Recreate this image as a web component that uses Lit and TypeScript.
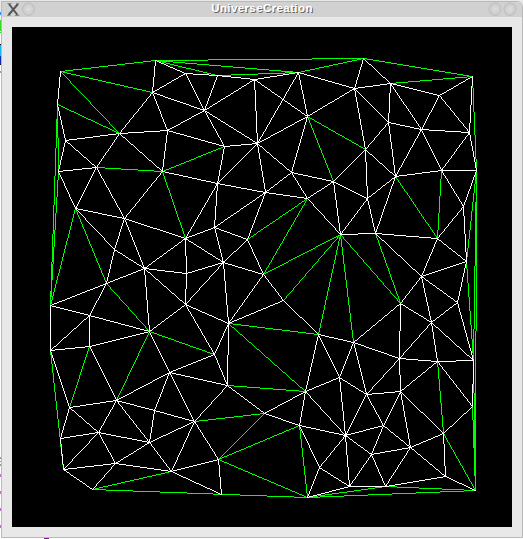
import { LitElement, html, css, svg } from "lit";
import { customElement } from "lit/decorators.js";

// Mesh vertices: name -> [x, y] in window coordinates.
const V: Record<string, [number, number]> = {
  A: [60, 71], B: [155, 60], C: [152, 92], D: [185, 73], E: [119, 133], F: [57, 104],
  G: [65, 140], H: [58, 171], I: [96, 167], J: [167, 130], K: [162, 171], L: [217, 75],
  M: [254, 79], N: [204, 110], O: [298, 72], P: [307, 116], Q: [257, 143], R: [224, 146],
  S: [217, 183], T: [291, 172], U: [265, 192], V: [307, 198], W: [363, 58], X: [354, 88],
  Y: [390, 83], Z: [472, 76], a: [439, 95], b: [388, 122], c: [421, 129], d: [469, 132],
  e: [365, 149], f: [333, 181], g: [395, 176], h: [441, 170], i: [476, 170], j: [367, 198],
  k: [75, 208], l: [124, 218], m: [185, 238], n: [114, 249], o: [144, 268], p: [106, 283],
  q: [50, 305], r: [89, 315], s: [149, 331], t: [50, 350], u: [214, 227], v: [247, 239],
  w: [223, 262], x: [186, 273], y: [185, 304], z: [263, 274], aa: [283, 300], bb: [228, 323],
  cc: [318, 334], dd: [340, 234], ee: [375, 233], ff: [437, 238], gg: [463, 206],
  hh: [466, 261], ii: [421, 276], jj: [457, 302], kk: [400, 303], ll: [431, 322],
  mm: [353, 342], nn: [89, 346], oo: [69, 407], pp: [116, 400], qq: [169, 372],
  rr: [154, 410], uu: [98, 432], vv: [60, 438], ss: [149, 442], ww: [63, 469],
  xx: [115, 463], yy: [92, 489], zz: [171, 471], A1: [214, 354], A2: [227, 385],
  A3: [305, 391], A4: [194, 421], A5: [264, 413], A6: [299, 425], A7: [218, 459],
  A8: [221, 494], A9: [307, 497], B1: [319, 467], B2: [339, 377], B3: [399, 358],
  B4: [437, 361], B5: [473, 360], B6: [366, 394], B7: [400, 391], B8: [472, 406],
  B9: [383, 425], C1: [345, 435], C2: [443, 433], C3: [371, 454], C4: [410, 447],
  C5: [349, 486], C6: [385, 486], C7: [445, 476], C8: [475, 490],
};

const WHITE = `
A-F F-G G-H G-E G-I H-I H-k I-k I-l I-E E-C E-J E-K C-B C-D C-J C-N B-D J-K J-N J-R K-l K-S
D-L D-N L-N L-M M-N M-O M-Q M-P O-Q O-P O-X N-Q N-R R-Q R-S P-X P-Q P-T Q-S Q-U Q-T S-U S-m
S-u U-T U-u U-V U-v T-V T-f V-f V-dd W-X W-Y X-Y X-b X-e Y-b Y-c Y-a Z-a Z-d a-c a-d b-c b-e
b-g c-d c-g c-h d-h d-i h-g h-i h-gg i-gg e-f e-g e-j f-j f-dd g-j g-ee j-dd j-ee
k-l k-n n-o l-n n-p l-o l-m o-m o-x o-p o-y o-s p-q p-r q-r q-t r-t r-s r-nn t-nn nn-s s-y
s-qq m-x m-w m-u x-y x-w w-u w-v w-y w-z w-bb u-v v-z z-aa z-bb aa-bb aa-cc y-bb y-A1 bb-A1
bb-A2 cc-mm cc-A3 cc-B2 dd-ee ee-ff ee-ii ff-gg ff-hh ff-ii gg-hh hh-ii hh-jj ii-jj ii-kk
ii-ll jj-ll jj-B5 kk-ll kk-mm kk-B3 ll-B3 ll-B4 ll-B5 mm-B2 mm-B3 mm-B6 B3-B4 B4-B5 B3-B6
B3-B7 B2-B6 B2-A3 B2-C1 B6-B7 B6-B9 B6-C1 B7-B4 B7-B9 B7-C4 B7-C2 B4-B8 B5-B8 B8-C2 B9-C1
B9-C3 B9-C4 C1-C3 C1-C5 C1-A6 C1-A3 C1-B1 C3-C5 C3-C6 C3-C4 C4-C6 C4-C7 C4-C2 C2-C7 C7-C8
C7-C6 C5-C6 C5-A9 C5-B1 t-oo oo-pp oo-uu oo-vv vv-uu vv-ww uu-ww uu-pp uu-ss uu-xx ww-xx
ww-yy xx-yy xx-ss xx-zz ss-pp ss-rr ss-A4 ss-zz pp-rr pp-qq pp-nn rr-qq rr-A4 qq-A1 qq-A2
qq-A4 zz-A4 zz-A7 zz-A8 A7-A8 A7-A4 A4-A2 A1-A2 A2-A5 A5-A3 A5-A6 A3-A6 A6-B1 B1-A9`;

const GREEN = `
A-B A-C A-E F-E F-q F-H H-q K-R K-m I-K B-W B-O B-L L-O O-W W-Z Y-Z P-e P-f g-ff h-ff Z-i
i-hh i-B5 i-C8 hh-B5 B5-C8 B8-C8 k-q k-p p-s s-pp s-A1 V-v V-z z-dd dd-aa dd-cc dd-mm dd-kk
ee-kk bb-cc bb-A3 A2-A3 A4-A5 A5-A7 A6-A7 A6-A9 A7-A9 yy-zz yy-A9 A9-C8 A9-C6 C6-C8 B4-C2
C2-C8 nn-oo t-ww`;

// One-pixel stepped line, emitted as unit squares along the major axis.
function pixelLine([x0, y0]: [number, number], [x1, y1]: [number, number]): string {
  const n = Math.max(Math.abs(x1 - x0), Math.abs(y1 - y0));
  let d = "";
  for (let k = 0; k <= n; k++) {
    const x = Math.round(x0 + ((x1 - x0) * k) / n);
    const y = Math.round(y0 + ((y1 - y0) * k) / n);
    d += `M${x} ${y}h1v1h-1z`;
  }
  return d;
}

const trace = (edges: string) =>
  edges.trim().split(/\s+/).map((edge) => {
    const [from, to] = edge.split("-");
    return pixelLine(V[from], V[to]);
  }).join("");

@customElement("mesh-view")
export class MeshView extends LitElement {
  static styles = css`
    :host { display: block; width: 500px; height: 500px; background: #000; }
    svg { display: block; shape-rendering: crispEdges; }
    .outer { fill: #0f0; }
    .inner { fill: #fff; }
  `;
  render() {
    return html`<svg width="500" height="500" viewBox="12 27 500 500">
      ${svg`<path class="outer" d=${trace(GREEN)}></path><path class="inner" d=${trace(WHITE)}></path>`}
    </svg>`;
  }
}

@customElement("app-root")
export class AppRoot extends LitElement {
  static styles = css`
    :host {
      display: grid;
      grid-template-columns: 1px 522px;
      grid-template-rows: 538px 1px;
      width: 523px;
      height: 539px;
      overflow: hidden;
      background: #e8e8e8;
    }
    .window {
      box-sizing: border-box;
      height: 537px;
      margin-top: 1px;
      border: 1px solid #b8bab8;
      border-radius: 0 6px 0 0;
      background: #e8e8e8;
    }
    .bar {
      display: grid;
      grid-template-columns: 34px 1fr 34px;
      height: 15px;
      background: #d1d1d1;
      border-radius: 0 5px 0 0;
    }
    .buttons { display: block; width: 34px; height: 15px; }
    .title {
      font: bold 11.5px/13px "Liberation Sans", Arial, sans-serif;
      letter-spacing: 0.4px;
      text-align: center;
      color: #fff;
      text-shadow: 1px 1px 0 #666;
    }
    mesh-view { margin: 10px 0 0 10px; }
    .strip { grid-row: 1 / 3; width: 1px; height: 539px; }
    .below { display: block; width: 522px; height: 1px; }
  `;

  private orb(cx: number) {
    return svg`<ellipse cx=${cx} cy="7.2" rx="6" ry="6.3" fill="url(#orb)" stroke="#bfbfbf" stroke-width="1"></ellipse>`;
  }

  private gradient() {
    return svg`<defs><radialGradient id="orb"><stop offset="0" stop-color="#dedede"></stop><stop offset="1" stop-color="#c8c8c8"></stop></radialGradient></defs>`;
  }

  render() {
    return html`
      <svg class="strip" width="1" height="539" viewBox="0 0 1 539" shape-rendering="crispEdges">
        <path fill="#fff" d="M0 16h1v523h-1z"></path>
        <path fill="#3a8cf0" d="M0 12h1v3h-1z"></path>
        <path fill="#38d826" d="M0 20h1v11h-1zM0 32h1v1h-1z"></path>
        <path fill="#111" d="M0 44h1v1h-1zM0 64h1v1h-1z"></path>
        <path fill="#18b8f0" d="M0 45h1v11h-1z"></path>
        <path fill="#0828c0" d="M0 56h1v8h-1z"></path>
        <path fill="#999" d="M0 71h1v2h-1zM0 457h1v2h-1zM0 461h1v1h-1zM0 464h1v2h-1z"></path>
        <path fill="#c070c0" d="M0 474h1v3h-1zM0 491h1v3h-1zM0 508h1v3h-1zM0 525h1v3h-1z"></path>
      </svg>
      <div class="window">
        <div class="bar">
          <svg class="buttons" width="34" height="15" viewBox="0 0 34 15">
            ${this.gradient()}
            <path d="M7 2l8.5 11M16 2l-9.5 11" stroke="#555" stroke-width="2" fill="none"></path>
            <path d="M5.5 1.5h4M14 1.5h3M5 13.5h3.5M13 13.5h4.5" stroke="#888" stroke-width="1"></path>
            ${this.orb(26.5)}
          </svg>
          <div class="title">UniverseCreation</div>
          <svg class="buttons" width="34" height="15" viewBox="0 0 34 15">
            ${this.gradient()}${this.orb(7)}${this.orb(22)}
          </svg>
        </div>
        <mesh-view></mesh-view>
      </div>
      <svg class="below" width="522" height="1" viewBox="1 0 522 1" shape-rendering="crispEdges">
        <path fill="#fff" d="M1 0h522v1h-522z"></path>
        <path fill="#8a108a" d="M44 0h5v1h-5z"></path>
      </svg>
    `;
  }
}
